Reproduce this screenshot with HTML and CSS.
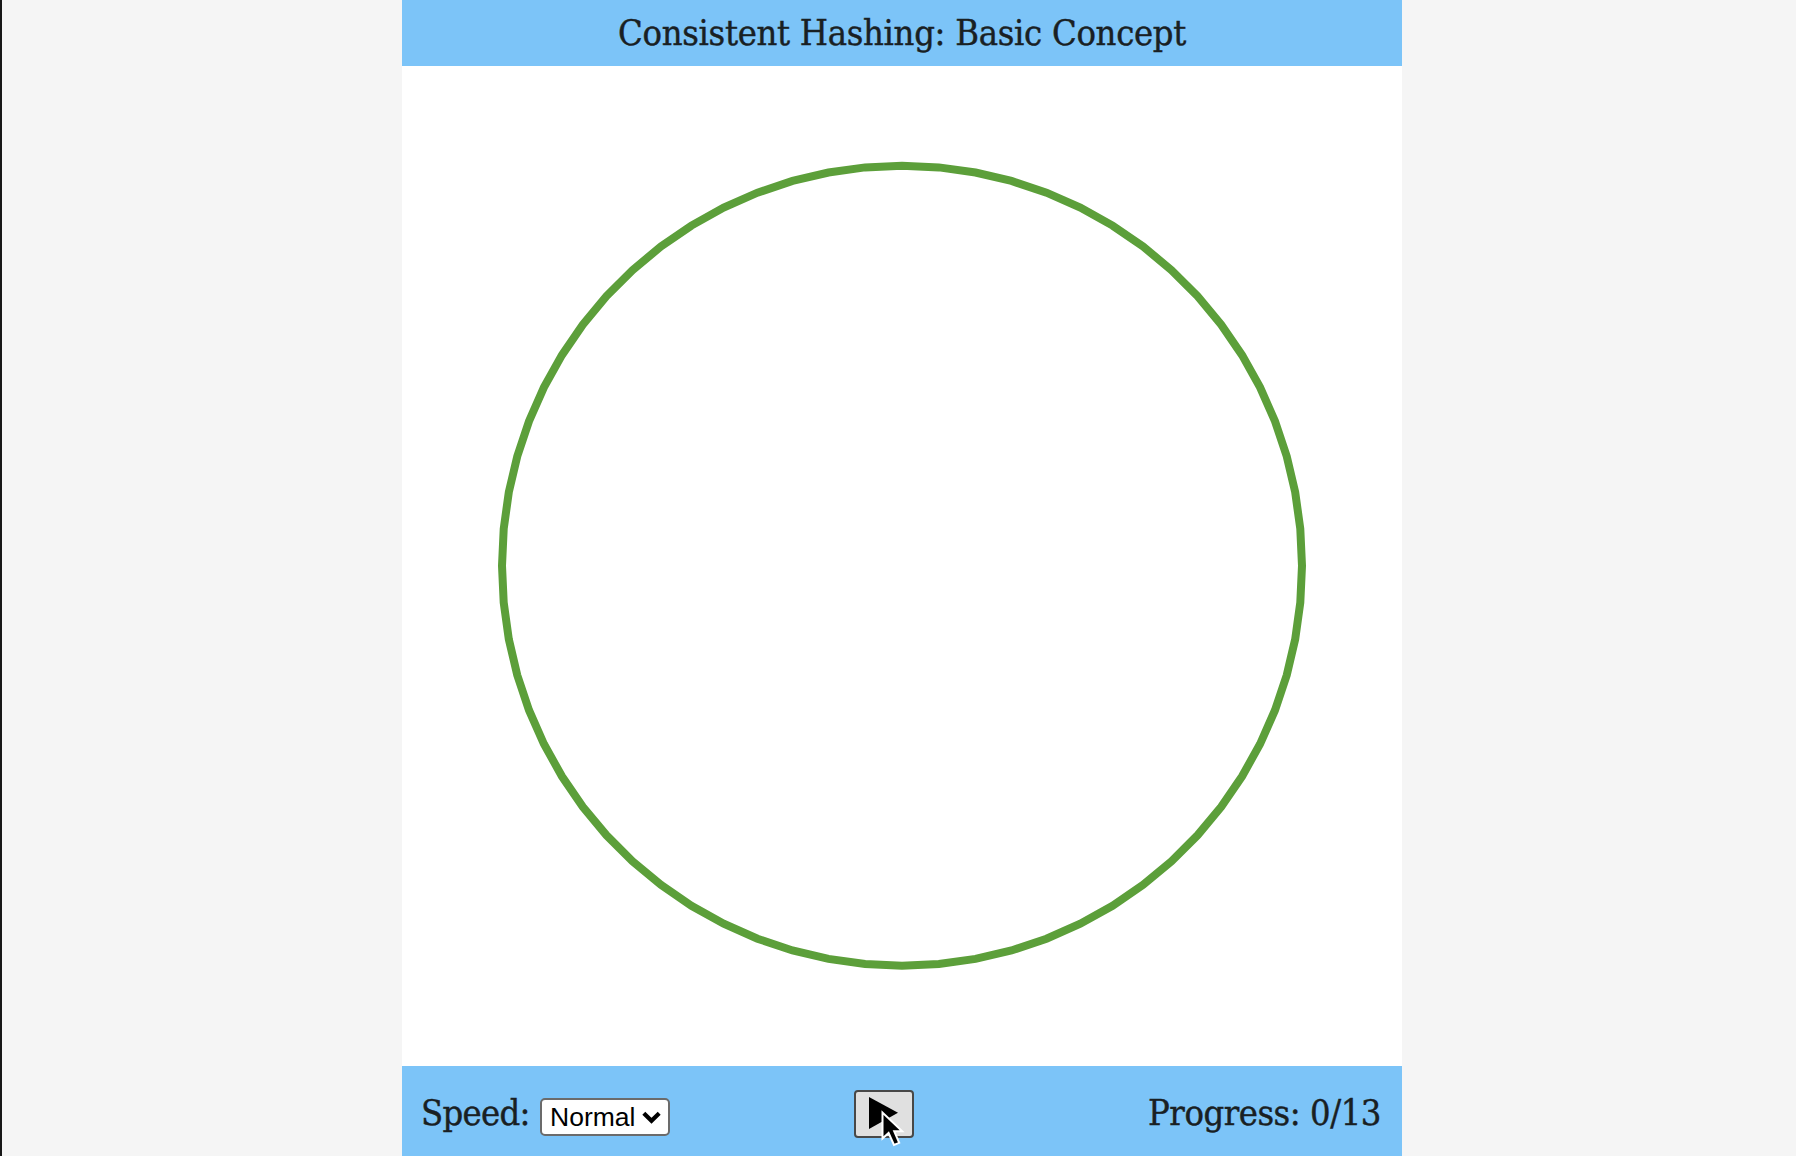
FILE: index.html
```html
<!DOCTYPE html>
<html lang="en">
<head>
<meta charset="utf-8">
<title>Consistent Hashing: Basic Concept</title>
<link rel="stylesheet" href="styles.css">
</head>
<body>
<main class="player">
  <header class="header"><h1 class="title">Consistent Hashing: Basic Concept</h1></header>
  <section class="stage">
    <svg class="ring" viewBox="0 0 1000 1000" aria-label="Hash ring"><polygon id="ring"/></svg>
  </section>
  <footer class="controls">
    <div class="speed">
      <span class="label speed-label">Speed:</span>
      <button class="select" type="button"><span>Normal</span>
        <svg class="chevron" viewBox="0 0 19 13"><path d="M1.8 2.2 9.5 9.7 17.2 2.2"/></svg>
      </button>
    </div>
    <button class="play" type="button" aria-label="Play">
      <svg class="play-icon" viewBox="0 0 29 32"><path d="M0 0 29 15.7 0 32Z"/></svg>
      <svg class="cursor" viewBox="0 0 24 37"><path d="M1.5 2.5V28.5L7.6 23 13 35 18.2 32.8 13.2 21.3H21.2Z"/></svg>
    </button>
    <div class="progress"><span class="label progress-label">Progress: 0/13</span></div>
  </footer>
</main>
<script src="ring.js"></script>
</body>
</html>
```
FILE: ring.js
```js
const SEGMENTS = 68;
const points = Array.from({ length: SEGMENTS }, (_, i) => {
  const angle = (i / SEGMENTS) * Math.PI * 2;
  return (500 + 400 * Math.cos(angle)).toFixed(2) + ',' + (499.7 + 400 * Math.sin(angle)).toFixed(2);
});
document.getElementById('ring').setAttribute('points', points.join(' '));
```
FILE: styles.css
```css
* { box-sizing: border-box; }
body {
  margin: 0;
  height: 1156px;
  overflow: hidden;
  padding-left: 400px;
  background: #f5f5f5;
  border-left: 2px solid #171717;
  color: #192023;
  font-family: "DejaVu Serif Condensed", "DejaVu Serif", serif;
  font-stretch: condensed;
}
.player {
  width: 1000px;
  height: 1156px;
  display: grid;
  grid-template-rows: 66px 1000px 90px;
  background: #fff;
}
.header { background: #7cc4f8; display: flex; justify-content: center; align-items: center; }
.title { margin: 0; font-size: 36px; font-weight: 400; line-height: 66px; letter-spacing: -0.3px; white-space: nowrap; -webkit-text-stroke: 0.4px #192023; }
.stage { display: flex; }
.ring { width: 1000px; height: 1000px; fill: none; stroke: #5c9f3a; stroke-width: 8; }
.controls {
  background: #7cc4f8;
  display: grid;
  grid-template-columns: 432px 60px 1fr;
  align-items: center;
  padding: 6px 21px 0 19px;
}
.label { display: inline-block; padding-bottom: 2px; font-size: 36px; line-height: 48px; white-space: nowrap; -webkit-text-stroke: 0.4px #192023; }
.speed-label { width: 109px; letter-spacing: -0.7px; }
.progress-label { letter-spacing: -0.45px; }
.speed { display: flex; align-items: center; gap: 10px; }
.select {
  width: 130px;
  height: 38px;
  margin-top: 6px;
  padding: 0 7px 0 8px;
  display: flex;
  align-items: center;
  justify-content: space-between;
  border: 2px solid #6b6b6b;
  border-radius: 5px;
  background: #fff;
  color: #000;
  font: 26.5px "Liberation Sans", Arial, sans-serif;
}
.chevron { width: 19px; height: 13px; fill: none; stroke: #000; stroke-width: 4.2; }
.play {
  position: relative;
  width: 60px;
  height: 48px;
  margin-left: 1px;
  padding: 0 0 2px 13px;
  display: flex;
  align-items: center;
  border: 2px solid #484848;
  border-radius: 4px;
  background: #e0e0e0;
}
.play-icon { width: 29px; height: 32px; }
.cursor { position: absolute; left: 25px; top: 18px; width: 24px; height: 37px; stroke: #fff; stroke-width: 2; }
.progress { text-align: right; }
```
